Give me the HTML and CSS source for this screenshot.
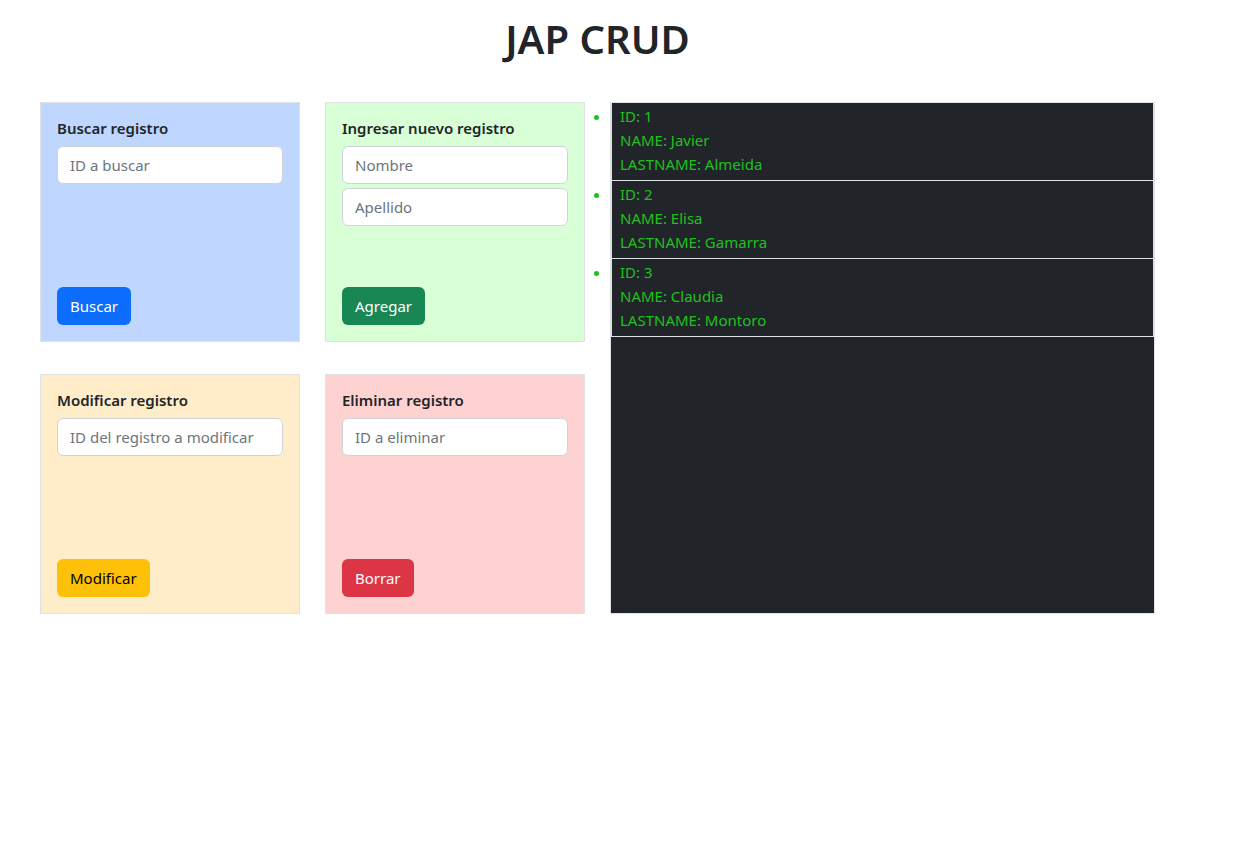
FILE: index.html
```html
<!DOCTYPE html>
<html lang="es">
<head>
<meta charset="utf-8">
<title>JAP CRUD</title>
<link rel="stylesheet" href="styles.css">
</head>
<body>
<div class="page">
  <h1 class="title">JAP CRUD</h1>
  <div class="grid">
    <div class="card card-blue">
      <div class="fields">
        <h6 class="card-title">Buscar registro</h6>
        <input class="field" type="text" placeholder="ID a buscar">
      </div>
      <div><button class="btn btn-blue">Buscar</button></div>
    </div>
    <div class="card card-green">
      <div class="fields">
        <h6 class="card-title">Ingresar nuevo registro</h6>
        <input class="field" type="text" placeholder="Nombre">
        <input class="field" type="text" placeholder="Apellido">
      </div>
      <div><button class="btn btn-green">Agregar</button></div>
    </div>
    <div class="results">
      <ul class="list">
        <li class="item"><div>ID: 1</div><div>NAME: Javier</div><div>LASTNAME: Almeida</div></li>
        <li class="item"><div>ID: 2</div><div>NAME: Elisa</div><div>LASTNAME: Gamarra</div></li>
        <li class="item"><div>ID: 3</div><div>NAME: Claudia</div><div>LASTNAME: Montoro</div></li>
      </ul>
    </div>
    <div class="card card-yellow">
      <div class="fields">
        <h6 class="card-title">Modificar registro</h6>
        <input class="field" type="text" placeholder="ID del registro a modificar">
      </div>
      <div><button class="btn btn-yellow">Modificar</button></div>
    </div>
    <div class="card card-red">
      <div class="fields">
        <h6 class="card-title">Eliminar registro</h6>
        <input class="field" type="text" placeholder="ID a eliminar">
      </div>
      <div><button class="btn btn-red">Borrar</button></div>
    </div>
  </div>
</div>
</body>
</html>
```
FILE: styles.css
```css
* { box-sizing: border-box; }
html, body { margin: 0; padding: 0; background: #fff; }
body {
  font-family: "Noto Sans", "Open Sans", sans-serif;
  font-size: 15px;
  line-height: 24px;
  color: #212529;
}
.page {
  width: 1115px;
  margin-left: 40px;
  padding-top: 15px;
}
.title {
  margin: 0 0 39px 0;
  text-align: center;
  font-size: 40px;
  font-weight: 600;
  line-height: 48px;
}
.grid {
  display: grid;
  grid-template-columns: 260px 260px 545px;
  grid-template-rows: 240px 240px;
  column-gap: 25px;
  row-gap: 32px;
}
.card {
  border: 1px solid #dee2e6;
  padding: 16px;
  display: flex;
  flex-direction: column;
  justify-content: space-between;
}
.card-blue { background: #bfd7ff; }
.card-green { background: #d9ffd6; }
.card-yellow { background: #ffedca; }
.card-red { background: #ffd2d2; }
.fields { display: flex; flex-direction: column; }
.card-title {
  margin: 0 0 8px 0;
  font-size: 15px;
  font-weight: 600;
  line-height: 19px;
}
.field {
  display: block;
  width: 100%;
  height: 38px;
  padding: 6px 12px;
  font: inherit;
  font-size: 15px;
  line-height: 24px;
  color: #212529;
  background: #fff;
  border: 1px solid #ced4da;
  border-radius: 6px;
  margin-bottom: 4px;
}
.field::placeholder { color: #6c757d; opacity: 1; }
.btn {
  font: inherit;
  font-size: 15px;
  line-height: 24px;
  height: 38px;
  padding: 6px 12px;
  border: 1px solid transparent;
  border-radius: 6px;
  color: #fff;
}
.btn-blue { background: #0d6efd; }
.btn-green { background: #198754; }
.btn-yellow { background: #ffc107; color: #000; }
.btn-red { background: #dc3545; }
.results {
  grid-column: 3;
  grid-row: 1 / span 2;
  background: #212529;
  border: 1px solid #dee2e6;
}
.list {
  margin: 0;
  padding: 0;
  list-style: disc outside;
  color: #20c020;
}
.item {
  border: 1px solid #dee2e6;
  border-top: 0;
  padding: 1px 8px 4px 8px;
  line-height: 24px;
}
.item::marker { color: #20c020; }
```
